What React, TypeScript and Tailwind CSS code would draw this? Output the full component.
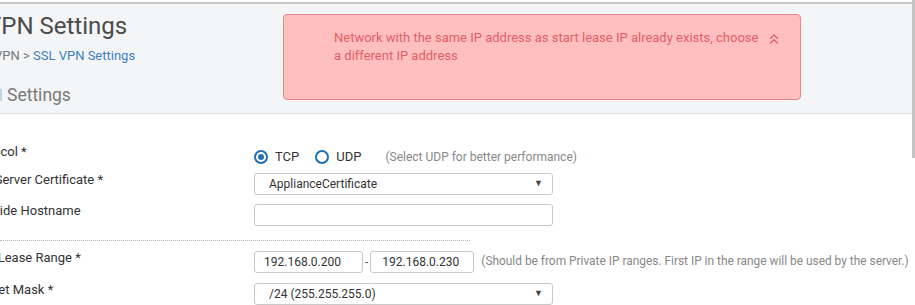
import { ChevronsUp } from 'lucide-react';

const font = { fontFamily: 'Roboto, "Liberation Sans", sans-serif' };

function Radio({ checked, label }: { checked?: boolean; label: string }) {
  return (
    <label className="flex items-center gap-[7px] text-[13px] text-[#333]">
      <span className="flex h-[14px] w-[14px] items-center justify-center rounded-full border-2 border-[#1f6fb5]">
        {checked && <span className="h-[6px] w-[6px] rounded-full bg-[#1f6fb5]" />}
      </span>
      {label}
    </label>
  );
}

function Select({ value }: { value: string }) {
  return (
    <div className="flex h-[22px] w-[299px] items-center justify-between rounded-[3px] border border-[#c9c9c9] bg-white pl-[14px] pr-[9px] text-[12px] text-[#333]">
      <span>{value}</span>
      <span className="text-[9px] text-[#444]">▼</span>
    </div>
  );
}

function Row({ label, className, children }: { label: string; className?: string; children: React.ReactNode }) {
  return (
    <div className={'flex items-start ' + (className ?? '')}>
      <div className="ml-[-31px] mt-[-1px] w-[285px] shrink-0 text-[13px] leading-[15px] text-[#333]">{label}</div>
      {children}
    </div>
  );
}

export default function App() {
  return (
    <div className="relative h-[305px] w-[915px] overflow-hidden bg-white" style={font}>
      <div className="absolute right-0 top-0 h-[158px] w-[3px] bg-[#c4c4c4]" />
      <div className="h-[112px] border-b border-[#dcdcdc] bg-[#f4f5f7]">
        <div className="mt-[2px] h-[2px] bg-[#c9c9c9]" />
        <div className="flex">
          <div className="w-[283px] shrink-0">
            <div className="ml-[-14px] mt-[7px] text-[24px] leading-[30px] text-[#4a4a4a]">VPN Settings</div>
            <div className="ml-[-6px] mt-[5px] text-[13px] text-[#777]">
              VPN &gt; <span className="text-[#3f7fbf]">SSL VPN Settings</span>
            </div>
            <div className="mt-[19px] flex items-center gap-[5px]">
              <span className="h-[12px] w-[2px] bg-[#c2d3e4]" />
              <span className="text-[17.5px] leading-[20px] text-[#7a7a7a]">Settings</span>
            </div>
          </div>
          <div className="mt-[10px] flex h-[86px] w-[518px] items-start justify-between rounded-[4px] border border-[#e4868d] bg-[#ffbfbf] pl-[50px] pr-[18px] pt-[14px] text-[13px] leading-[18px] text-[#df6069]">
            <p className="w-[430px]">Network with the same IP address as start lease IP already exists, choose a different IP address</p>
            <ChevronsUp size={16} strokeWidth={2} className="mt-[2px]" />
          </div>
        </div>
      </div>

      <div className="pt-[31px]">
        <Row label="Protocol *" className="h-[28px]">
          <div className="flex items-center pt-[2px]">
            <Radio checked label="TCP" />
            <div className="ml-[16px]">
              <Radio label="UDP" />
            </div>
            <span className="ml-[24px] text-[12px] text-[#888]">(Select UDP for better performance)</span>
          </div>
        </Row>
        <Row label="SSL Server Certificate *" className="h-[31px]">
          <Select value="ApplianceCertificate" />
        </Row>
        <Row label="Override Hostname">
          <div className="h-[22px] w-[299px] rounded-[3px] border border-[#c9c9c9] bg-white" />
        </Row>
        <div className="mb-[10px] mt-[14px] w-[470px] border-t border-dotted border-[#b5b5b5]" />
        <Row label="IPv4 Lease Range *" className="h-[32px]">
          <div className="flex items-center">
            <div className="flex h-[22px] w-[109px] items-center rounded-[3px] border border-[#c9c9c9] pl-[9px] text-[12px] text-[#333]">192.168.0.200</div>
            <span className="mx-[2px] text-[12px] text-[#555]">-</span>
            <div className="flex h-[22px] w-[104px] items-center rounded-[3px] border border-[#c9c9c9] pl-[11px] text-[12px] text-[#333]">192.168.0.230</div>
            <span className="ml-[7px] whitespace-nowrap text-[11.9px] text-[#888]">(Should be from Private IP ranges. First IP in the range will be used by the server.)</span>
          </div>
        </Row>
        <Row label="Subnet Mask *">
          <Select value="/24 (255.255.255.0)" />
        </Row>
      </div>
    </div>
  );
}
